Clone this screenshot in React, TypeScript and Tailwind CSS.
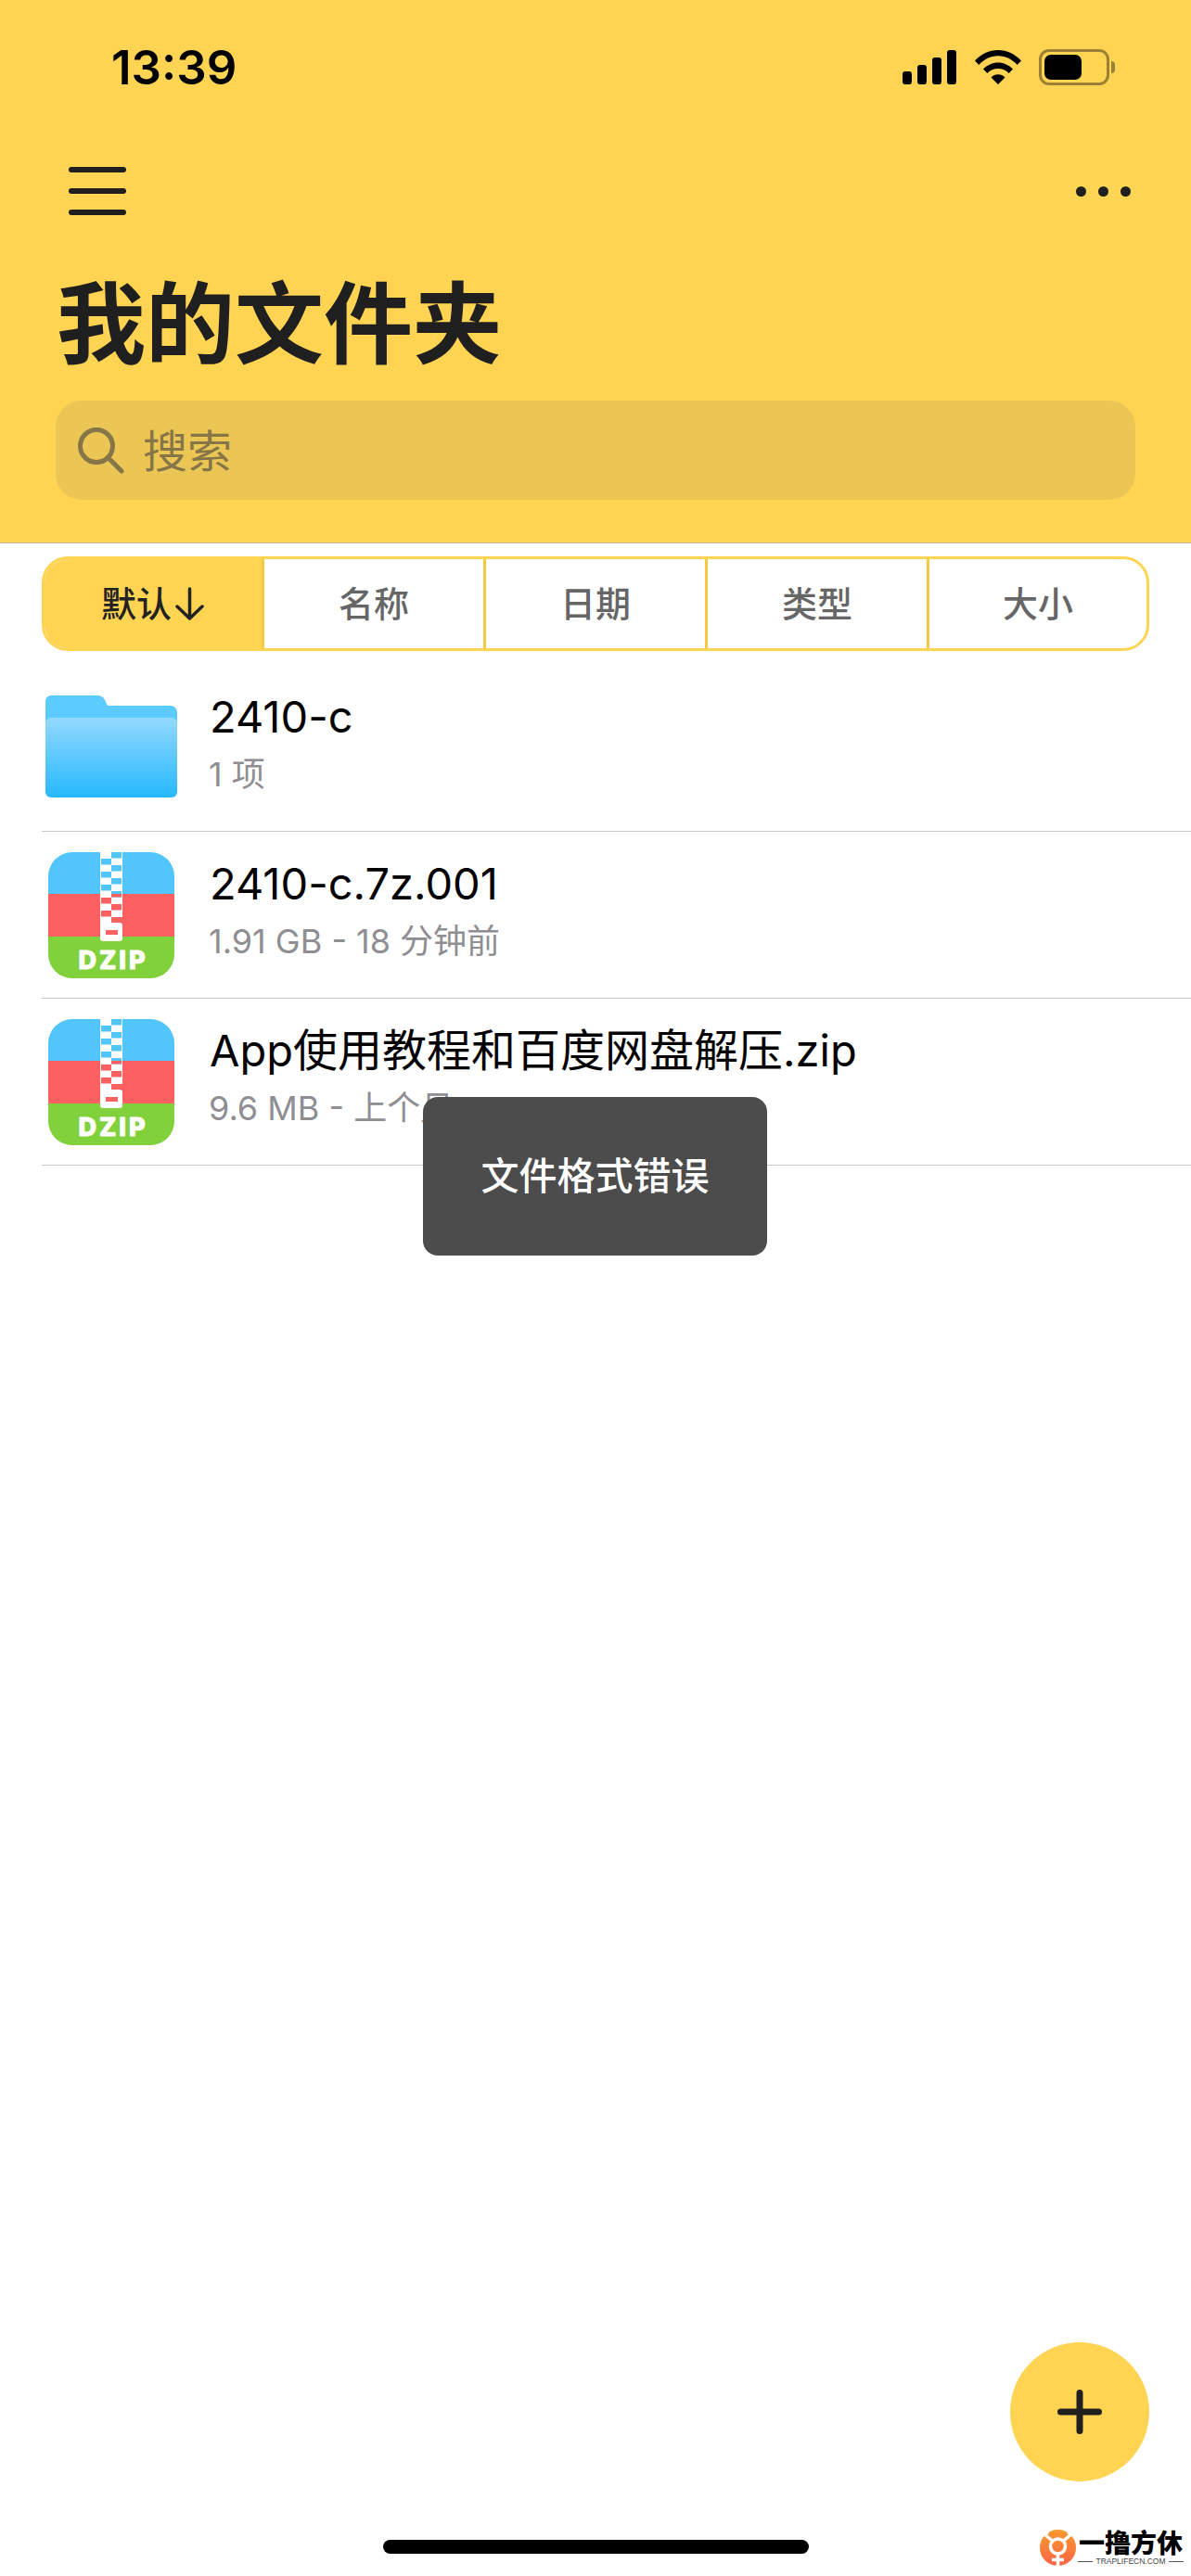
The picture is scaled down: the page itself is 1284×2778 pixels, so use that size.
import { useId } from 'react'
import type { ReactNode } from 'react'

const sortTabs = ['名称', '日期', '类型', '大小']

function SignalIcon() {
  return (
    <svg width="58" height="37" viewBox="0 0 58 37" fill="#000">
      <rect x="0" y="23" width="10" height="14" rx="3" />
      <rect x="16" y="16" width="10" height="21" rx="3" />
      <rect x="32" y="8" width="10" height="29" rx="3" />
      <rect x="48" y="0" width="10" height="37" rx="3" />
    </svg>
  )
}

function WifiIcon() {
  return (
    <svg width="50" height="37" viewBox="0 0 50 37" fill="#000">
      <path d="M0 11.5C6.5 4.3 15.3 0 25 0s18.500 4.300 25 11.500l-4.300 4.500C40.200 10 33 6.300 25 6.300S9.800 10 4.300 16z" />
      <path d="M9 20.500c4.200-4.300 9.800-7 16-7s11.800 2.700 16 7l-4.400 4.500c-3-3-7-4.900-11.600-4.900s-8.600 1.900-11.600 4.900z" />
      <path d="M17.500 29.500c2-2 4.600-3.200 7.500-3.200s5.500 1.200 7.500 3.200L25 37z" />
    </svg>
  )
}

function BatteryIcon() {
  return (
    <div className="flex items-center">
      <div className="flex h-[39px] w-[76px] items-center rounded-[11px] border-[3px] border-[#9a8034] pl-[3px]">
        <div className="h-[27px] w-[40px] rounded-[7px] bg-black" />
      </div>
      <div className="ml-[2px] h-[13px] w-[4px] rounded-r-full bg-[#9a8034]" />
    </div>
  )
}

function FolderIcon() {
  const gradientId = useId()
  return (
    <svg width="142" height="112" viewBox="0 0 142 112">
      <defs>
        <linearGradient id={gradientId} x1="0" y1="0" x2="0" y2="1">
          <stop offset="0" stopColor="#93d9ff" />
          <stop offset="1" stopColor="#27b8fd" />
        </linearGradient>
      </defs>
      <path
        d="M0 7a6 6 0 0 1 6-6h49c5 0 8 2 9.500 6l2.500 5h68a7 7 0 0 1 7 7v40H0z"
        fill="#5ccbff"
      />
      <path
        d="M0 31a6 6 0 0 1 6-6h130a6 6 0 0 1 6 6v74a6 6 0 0 1-6 6H6a6 6 0 0 1-6-6z"
        fill={`url(#${gradientId})`}
      />
    </svg>
  )
}

function ZipIcon() {
  const clipId = useId()
  const cells = [
    { x: 68, y: 0, fill: '#52c5fa' },
    { x: 57, y: 7, fill: '#52c5fa' },
    { x: 68, y: 14, fill: '#52c5fa' },
    { x: 57, y: 21, fill: '#52c5fa' },
    { x: 68, y: 28, fill: '#52c5fa' },
    { x: 57, y: 35, fill: '#52c5fa' },
    { x: 68, y: 42, fill: '#52c5fa' },
    { x: 57, y: 49, fill: '#fd6060' },
    { x: 68, y: 56, fill: '#fd6060' },
    { x: 57, y: 63, fill: '#fd6060' },
  ]
  return (
    <svg width="136" height="136" viewBox="0 0 136 136">
      <defs>
        <clipPath id={clipId}>
          <rect width="136" height="136" rx="26" />
        </clipPath>
      </defs>
      <g clipPath={`url(#${clipId})`}>
        <rect width="136" height="45" fill="#52c5fa" />
        <rect y="45" width="136" height="46" fill="#fd6060" />
        <rect y="91" width="136" height="45" fill="#80d13c" />
        <rect x="56" width="24" height="70" fill="#fff" />
        <rect x="56" y="65" width="12" height="14" fill="#fff" />
        <rect x="56" y="76" width="24" height="20" rx="3" fill="#fff" />
        {cells.map((cell) => (
          <rect key={`${cell.x}-${cell.y}`} x={cell.x} y={cell.y} width="11" height="6.500" fill={cell.fill} />
        ))}
        <rect x="62" y="84" width="13" height="5" fill="#fd6060" />
        <rect x="68" y="45" width="11" height="3.500" fill="#fd6060" />
        <text
          x="68.500"
          y="126"
          textAnchor="middle"
          textLength="72"
          fill="#fff"
          stroke="#fff"
          strokeWidth="1"
          strokeLinejoin="round"
          className="text-[27px] font-extrabold"
        >
          DZIP
        </text>
      </g>
    </svg>
  )
}

function FileRow({
  icon,
  name,
  meta,
}: {
  icon: ReactNode
  name: ReactNode
  meta: string
}) {
  return (
    <div className="flex h-[180px] items-center border-b border-[#c8c8c8]">
      <div className="flex w-[181px] shrink-0 items-center">{icon}</div>
      <div className="flex flex-col pb-[13px]">
        <div className="text-[47px] leading-[60px] text-black">{name}</div>
        <div className="-ml-px mt-[9px] text-[36px] leading-[46px] text-[#8e8e93]">{meta}</div>
      </div>
    </div>
  )
}

function Watermark() {
  const gradientId = useId()
  return (
    <div className="absolute left-[1121px] top-[2728px] flex items-start">
      <svg width="39" height="39" viewBox="0 0 39 39">
        <defs>
          <linearGradient id={gradientId} x1="0" y1="0" x2="0" y2="1">
            <stop offset="0" stopColor="#f79b2c" />
            <stop offset="1" stopColor="#fd6446" />
          </linearGradient>
        </defs>
        <circle cx="19.500" cy="19.500" r="19.500" fill={`url(#${gradientId})`} />
        <g fill="none" stroke="#fff" strokeWidth="3.500">
          <circle cx="19.500" cy="18" r="8" />
          <path d="M19.500 26V39M13 32.500h13M13.500 12L5 5M25.500 12L34 5" />
        </g>
        <path d="M2 2l8 0-1 3-4 2-3 0zM37 2l-8 0 1 3 4 2 3 0z" fill="#fff" />
      </svg>
      <div className="ml-[3px] flex w-[112px] flex-col items-center">
        <div className="text-[28px] font-black leading-[30px] text-black">一撸方休</div>
        <div className="flex items-center gap-[3px]">
          <div className="h-px w-[16px] bg-[#555]" />
          <div className="font-['Liberation_Sans','sans-serif'] text-[8.500px] leading-[9px] text-[#444]">
            TRAPLIFECN.COM
          </div>
          <div className="h-px w-[16px] bg-[#555]" />
        </div>
      </div>
    </div>
  )
}

export default function App() {
  return (
    <div className="relative h-[2778px] w-[1284px] overflow-hidden bg-white font-['Inter','Noto_Sans_CJK_SC','sans-serif']">
      <header className="h-[586px] border-b border-[#bdb9a8] bg-[#ffd452]">
        <div className="flex items-center justify-between pl-[120px] pr-[82px] pt-[53px]">
          <div className="text-[51px] font-semibold leading-[39px] text-black">13:39</div>
          <div className="flex items-center">
            <SignalIcon />
            <div className="ml-[20px]">
              <WifiIcon />
            </div>
            <div className="ml-[19px]">
              <BatteryIcon />
            </div>
          </div>
        </div>

        <div className="mt-[88px] flex items-center justify-between pl-[74px] pr-[65px]">
          <div className="flex w-[62px] flex-col gap-[17px]">
            <div className="h-[6px] rounded-full bg-[#1f1f1f]" />
            <div className="h-[6px] rounded-full bg-[#1f1f1f]" />
            <div className="h-[6px] rounded-full bg-[#1f1f1f]" />
          </div>
          <div className="flex gap-[13px]">
            <div className="size-[11px] rounded-full bg-[#1f1f1f]" />
            <div className="size-[11px] rounded-full bg-[#1f1f1f]" />
            <div className="size-[11px] rounded-full bg-[#1f1f1f]" />
          </div>
        </div>

        <h1 className="mt-[57px] pl-[61px] text-[96px] font-bold leading-[120px] text-[#1f1f1f]">我的文件夹</h1>

        <div className="mx-[60px] mt-[23px] flex h-[107px] items-center rounded-[28px] bg-[#ecc655] pl-[24px]">
          <svg width="50" height="50" viewBox="0 0 50 50" fill="none" stroke="#857547" strokeWidth="5" strokeLinecap="round">
            <circle cx="20" cy="20" r="17.500" />
            <path d="M32.500 32.500L47 47" />
          </svg>
          <span className="ml-[20px] pt-[2px] text-[48px] leading-none text-[#857547]">搜索</span>
        </div>
      </header>

      <div className="ml-[45px] mt-[14px] grid h-[102px] w-[1194px] grid-cols-[234px_239px_239px_239px_1fr] overflow-hidden rounded-[28px] border-[3px] border-[#ffd452] text-[38px] font-medium text-[#666]">
        <div className="flex items-center justify-center bg-[#ffd452] text-[#222]">
          默认
          <svg className="ml-[3px]" width="33" height="36" viewBox="0 0 33 36" fill="none" stroke="#222" strokeWidth="3.500" strokeLinecap="round" strokeLinejoin="round">
            <path d="M16.500 2v32M3 21l13.500 13L30 21" />
          </svg>
        </div>
        {sortTabs.map((tab) => (
          <div key={tab} className="flex items-center justify-center border-l-[3px] border-[#f6c945]">
            {tab}
          </div>
        ))}
      </div>

      <div className="ml-[45px] mt-[15px]">
        <FileRow
          icon={
            <div className="mb-[3px] ml-[4px]">
              <FolderIcon />
            </div>
          }
          name="2410-c"
          meta="1 项"
        />
        <FileRow
          icon={
            <div className="ml-[7px] mt-[1px]">
              <ZipIcon />
            </div>
          }
          name="2410-c.7z.001"
          meta="1.91 GB - 18 分钟前"
        />
        <FileRow
          icon={
            <div className="ml-[7px] mt-[1px]">
              <ZipIcon />
            </div>
          }
          name={
            <>
              App<span className="text-[48px]">使用教程和百度网盘解压</span>.zip
            </>
          }
          meta="9.6 MB - 上个月"
        />
      </div>

      <div className="absolute left-[456px] top-[1183px] flex h-[171px] w-[371px] items-center justify-center rounded-[16px] bg-[#4c4c4c] text-[41px] font-medium text-white">
        文件格式错误
      </div>

      <button className="absolute left-[1089px] top-[2526px] flex size-[150px] items-center justify-center rounded-full bg-[#ffd452]">
        <svg width="48" height="48" viewBox="0 0 48 48" fill="none" stroke="#1f1f1f" strokeWidth="7" strokeLinecap="round">
          <path d="M24 3.500v41M3.500 24h41" />
        </svg>
      </button>

      <div className="absolute left-[413px] top-[2739px] h-[15px] w-[459px] rounded-full bg-black" />

      <Watermark />
    </div>
  )
}
